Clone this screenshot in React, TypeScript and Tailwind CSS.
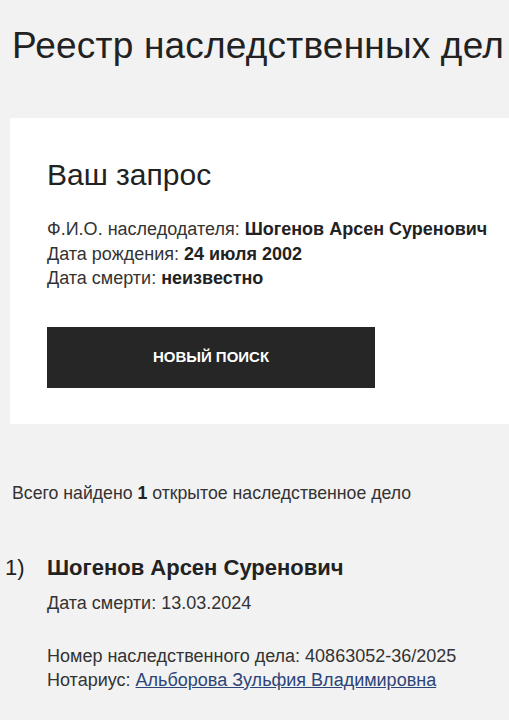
export default function App() {
    return (
        <div className="min-h-[720px] overflow-hidden bg-[#f2f2f2] text-[#222] font-['Liberation_Sans',Arial,sans-serif]">
            <h1 className="whitespace-nowrap pl-3 pt-[22px] text-[37px] leading-[48px] tracking-[0.2px]">
                Реестр наследственных дел
            </h1>

            {/* Request card */}
            <section className="ml-[10px] mt-[48px] w-[520px] bg-white pl-[37px] pt-[39px] pb-[36px]">
                <h2 className="text-[30px] leading-[36px]">Ваш запрос</h2>
                <div className="mt-[24px] text-[18px] leading-[24.5px]">
                    <p className="whitespace-nowrap">
                        <span className="text-[#333]">Ф.И.О. наследодателя: </span>
                        <b>Шогенов Арсен Суренович</b>
                    </p>
                    <p>
                        <span className="text-[#333]">Дата рождения: </span>
                        <b>24 июля 2002</b>
                    </p>
                    <p>
                        <span className="text-[#333]">Дата смерти: </span>
                        <b>неизвестно</b>
                    </p>
                </div>
                <button className="mt-[36px] flex h-[61px] w-[328px] items-center justify-center bg-[#262626] text-[15px] font-bold text-white">
                    НОВЫЙ ПОИСК
                </button>
            </section>

            <p className="mt-[57px] pl-3 text-[17.7px] leading-6 text-[#333]">
                Всего найдено <b className="text-[#222]">1</b> открытое наследственное дело
            </p>

            {/* Result */}
            <div className="mt-[49px] flex">
                <span className="w-[47px] pl-[5px] text-[22px] leading-7">1)</span>
                <div>
                    <h3 className="text-[22px] font-bold leading-7">Шогенов Арсен Суренович</h3>
                    <p className="mt-[9px] text-[18px] leading-6 text-[#333]">Дата смерти: 13.03.2024</p>
                    <div className="mt-[29px] text-[18px] leading-6 text-[#333]">
                        <p>Номер наследственного дела: 40863052-36/2025</p>
                        <p>
                            Нотариус:{' '}
                            <a href="#" className="text-[#2c4477] underline">
                                Альборова Зульфия Владимировна
                            </a>
                        </p>
                    </div>
                </div>
            </div>
        </div>
    );
}
